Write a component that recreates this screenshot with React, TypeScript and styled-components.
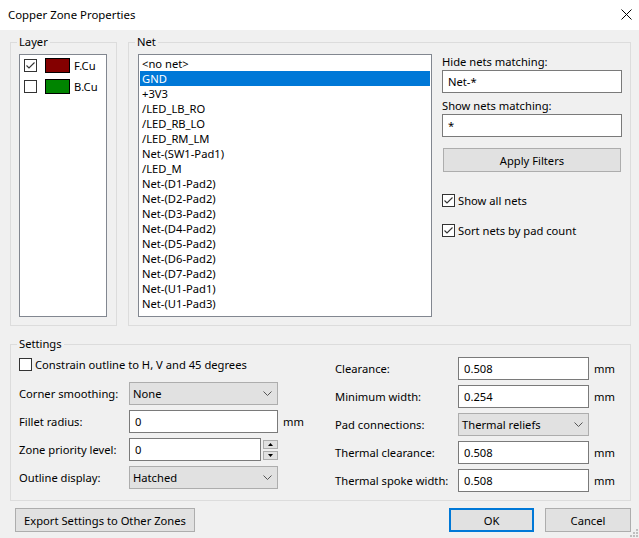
import React from "react";
import styled, { createGlobalStyle } from "styled-components";

const GlobalStyle = createGlobalStyle`
  html, body { margin: 0; padding: 0; background: #f0f0f0; }
  body {
    font-family: "Noto Sans", "Open Sans", sans-serif;
    font-size: 11.2px;
    color: #000;
  }
  * { box-sizing: border-box; }
`;

const Window = styled.div`
  position: relative;
  width: 639px;
  height: 538px;
  background: #f0f0f0;
  display: flex;
  flex-direction: column;
  overflow: hidden;
`;

const TitleBar = styled.div`
  flex: none;
  height: 30px;
  background: #fff;
  display: flex;
  align-items: center;
  justify-content: space-between;
  padding: 0 7px 2px 8px;
`;

const Title = styled.span`
  font-size: 11.4px;
`;

const Body = styled.div`
  flex: 1;
  display: flex;
  flex-direction: column;
  padding: 4px 8px 6px 10px;
`;

const TopRow = styled.div`
  display: flex;
  gap: 11px;
  height: 292px;
`;

const Group = styled.fieldset<{ $width?: number }>`
  margin: 0;
  min-width: 0;
  border: 1px solid #dcdcdc;
  padding: 4px 8px 8px;
  ${(p) => (p.$width ? `width: ${p.$width}px; flex: none;` : `flex: 1;`)}
`;

const Legend = styled.legend`
  padding: 0 2px;
  margin-left: -2px;
  line-height: 16px;
  font-size: 11.2px;
`;

const ListBox = styled.div<{ $width: number }>`
  width: ${(p) => p.$width}px;
  height: 263px;
  flex: none;
  background: #fff;
  border: 1px solid #828790;
  padding: 1px;
  overflow: hidden;
`;

const LayerRow = styled.div`
  height: 21px;
  display: flex;
  align-items: center;
  padding-left: 3px;
  margin-top: -1px;
  & + & { margin-top: 0; }
`;

const Swatch = styled.span<{ $color: string }>`
  width: 25px;
  height: 15px;
  margin-left: 8px;
  margin-right: 4px;
  background: ${(p) => p.$color};
  border: 1px solid #000;
  flex: none;
`;

const NetItem = styled.div<{ $selected?: boolean }>`
  height: 15px;
  line-height: 15px;
  padding-left: 2px;
  white-space: nowrap;
  background: ${(p) => (p.$selected ? "#0078d7" : "transparent")};
  color: ${(p) => (p.$selected ? "#fff" : "#000")};
`;

const NetContent = styled.div`
  display: flex;
  gap: 10px;
  padding-left: 1px;
`;

const FilterPanel = styled.div`
  flex: 1;
  display: flex;
  flex-direction: column;
`;

const FieldCaption = styled.div<{ $top?: number }>`
  line-height: 16px;
  margin-top: ${(p) => p.$top ?? 0}px;
`;

const TextBox = styled.div<{ $grow?: boolean }>`
  height: 23px;
  flex: ${(p) => (p.$grow ? "1" : "none")};
  background: #fff;
  border: 1px solid #7a7a7a;
  display: flex;
  align-items: center;
  padding-left: 5px;
  white-space: nowrap;
  min-width: 0;
`;

const Button = styled.div<{ $width?: number; $default?: boolean }>`
  height: 24px;
  ${(p) => (p.$width ? `width: ${p.$width}px;` : "")}
  background: #e1e1e1;
  border: ${(p) => (p.$default ? "2px solid #0078d7" : "1px solid #adadad")};
  display: flex;
  align-items: center;
  justify-content: center;
  white-space: nowrap;
  flex: none;
`;

const ApplyButton = styled(Button)`
  margin: 11px 1px 0;
`;

const CheckRow = styled.label<{ $top?: number }>`
  display: flex;
  align-items: center;
  gap: 3px;
  height: 16px;
  margin-top: ${(p) => p.$top ?? 0}px;
  white-space: nowrap;
`;

const Box = styled.span`
  width: 13px;
  height: 13px;
  flex: none;
  border: 1px solid #333;
  background: #fff;
  display: inline-flex;
  align-items: center;
  justify-content: center;
`;

const SettingsGroup = styled(Group)`
  margin-top: 10px;
  height: 165px;
  flex: none;
  padding: 0 8px 8px;
`;

const SettingsContent = styled.div`
  display: flex;
`;

const LeftCol = styled.div`
  width: 316px;
  flex: none;
  display: flex;
  flex-direction: column;
  gap: 5px;
`;

const RightCol = styled.div`
  flex: 1;
  display: flex;
  flex-direction: column;
  gap: 5px;
  padding-top: 5px;
`;

const ConstrainRow = styled(CheckRow)`
  height: 24px;
  margin-bottom: 1px;
`;

const FormRow = styled.div<{ $label: number; $control: number }>`
  display: grid;
  grid-template-columns: ${(p) => p.$label}px ${(p) => p.$control}px auto;
  align-items: center;
  height: 23px;
`;

const FieldLabel = styled.span`
  white-space: nowrap;
`;

const Unit = styled.span`
  margin-left: 5px;
`;

const ComboBox = styled.div`
  height: 23px;
  background: #e1e1e1;
  border: 1px solid #adadad;
  display: flex;
  align-items: center;
  justify-content: space-between;
  padding: 0 5px 0 3px;
  white-space: nowrap;
`;

const SpinField = styled.div`
  display: flex;
  align-items: center;
  height: 23px;
`;

const Spin = styled.div`
  width: 15px;
  margin-left: 2px;
  display: flex;
  flex-direction: column;
  gap: 2px;
  flex: none;
`;

const SpinButton = styled.div`
  height: 9px;
  background: #e1e1e1;
  border: 1px solid #adadad;
  display: flex;
  align-items: center;
  justify-content: center;
`;

const ButtonRow = styled.div`
  display: flex;
  align-items: center;
  margin-top: 7px;
  padding-left: 5px;
`;

const Spacer = styled.div`
  flex: 1;
`;

const Gap = styled.div`
  width: 11px;
  flex: none;
`;

const Grip = styled.svg`
  position: absolute;
  right: 1px;
  bottom: 1px;
`;

const Check = () => (
  <svg width="11" height="11" viewBox="0 0 11 11">
    <path d="M1.5 5.5 L4 8 L9.5 2.5" fill="none" stroke="#333" strokeWidth="1.1" />
  </svg>
);

const CheckBox = ({ checked }: { checked?: boolean }) => <Box>{checked && <Check />}</Box>;

const Chevron = () => (
  <svg width="9" height="5" viewBox="0 0 9 5">
    <path d="M0.5 0.5 L4.5 4.5 L8.5 0.5" fill="none" stroke="#555" strokeWidth="1" />
  </svg>
);

const nets = [
  "<no net>",
  "GND",
  "+3V3",
  "/LED_LB_RO",
  "/LED_RB_LO",
  "/LED_RM_LM",
  "Net-(SW1-Pad1)",
  "/LED_M",
  "Net-(D1-Pad2)",
  "Net-(D2-Pad2)",
  "Net-(D3-Pad2)",
  "Net-(D4-Pad2)",
  "Net-(D5-Pad2)",
  "Net-(D6-Pad2)",
  "Net-(D7-Pad2)",
  "Net-(U1-Pad1)",
  "Net-(U1-Pad3)",
];

export default function App() {
  return (
    <>
      <GlobalStyle />
      <Window>
        <TitleBar>
          <Title>Copper Zone Properties</Title>
          <svg width="11" height="11" viewBox="0 0 11 11">
            <path d="M0.5 0.5 L10.5 10.5 M10.5 0.5 L0.5 10.5" stroke="#000" strokeWidth="1" />
          </svg>
        </TitleBar>
        <Body>
          <TopRow>
            <Group $width={107}>
              <Legend>Layer</Legend>
              <ListBox $width={88}>
                <LayerRow>
                  <CheckBox checked />
                  <Swatch $color="#840000" />
                  F.Cu
                </LayerRow>
                <LayerRow>
                  <CheckBox />
                  <Swatch $color="#008400" />
                  B.Cu
                </LayerRow>
              </ListBox>
            </Group>
            <Group>
              <Legend>Net</Legend>
              <NetContent>
                <ListBox $width={294}>
                  {nets.map((n) => (
                    <NetItem key={n} $selected={n === "GND"}>
                      {n}
                    </NetItem>
                  ))}
                </ListBox>
                <FilterPanel>
                  <FieldCaption>Hide nets matching:</FieldCaption>
                  <TextBox>Net-*</TextBox>
                  <FieldCaption $top={5}>Show nets matching:</FieldCaption>
                  <TextBox>*</TextBox>
                  <ApplyButton>Apply Filters</ApplyButton>
                  <CheckRow $top={20}>
                    <CheckBox checked />
                    Show all nets
                  </CheckRow>
                  <CheckRow $top={14}>
                    <CheckBox checked />
                    Sort nets by pad count
                  </CheckRow>
                </FilterPanel>
              </NetContent>
            </Group>
          </TopRow>

          <SettingsGroup>
            <Legend>Settings</Legend>
            <SettingsContent>
              <LeftCol>
                <ConstrainRow>
                  <CheckBox />
                  Constrain outline to H, V and 45 degrees
                </ConstrainRow>
                <FormRow $label={110} $control={149}>
                  <FieldLabel>Corner smoothing:</FieldLabel>
                  <ComboBox>
                    None
                    <Chevron />
                  </ComboBox>
                </FormRow>
                <FormRow $label={110} $control={149}>
                  <FieldLabel>Fillet radius:</FieldLabel>
                  <TextBox>0</TextBox>
                  <Unit>mm</Unit>
                </FormRow>
                <FormRow $label={110} $control={149}>
                  <FieldLabel>Zone priority level:</FieldLabel>
                  <SpinField>
                    <TextBox $grow>0</TextBox>
                    <Spin>
                      <SpinButton>
                        <svg width="5" height="3" viewBox="0 0 5 3">
                          <path d="M0 3 L2.5 0 L5 3 Z" fill="#000" />
                        </svg>
                      </SpinButton>
                      <SpinButton>
                        <svg width="5" height="3" viewBox="0 0 5 3">
                          <path d="M0 0 L2.5 3 L5 0 Z" fill="#000" />
                        </svg>
                      </SpinButton>
                    </Spin>
                  </SpinField>
                </FormRow>
                <FormRow $label={110} $control={149}>
                  <FieldLabel>Outline display:</FieldLabel>
                  <ComboBox>
                    Hatched
                    <Chevron />
                  </ComboBox>
                </FormRow>
              </LeftCol>
              <RightCol>
                <FormRow $label={123} $control={131}>
                  <FieldLabel>Clearance:</FieldLabel>
                  <TextBox>0.508</TextBox>
                  <Unit>mm</Unit>
                </FormRow>
                <FormRow $label={123} $control={131}>
                  <FieldLabel>Minimum width:</FieldLabel>
                  <TextBox>0.254</TextBox>
                  <Unit>mm</Unit>
                </FormRow>
                <FormRow $label={123} $control={131}>
                  <FieldLabel>Pad connections:</FieldLabel>
                  <ComboBox>
                    Thermal reliefs
                    <Chevron />
                  </ComboBox>
                </FormRow>
                <FormRow $label={123} $control={131}>
                  <FieldLabel>Thermal clearance:</FieldLabel>
                  <TextBox>0.508</TextBox>
                  <Unit>mm</Unit>
                </FormRow>
                <FormRow $label={123} $control={131}>
                  <FieldLabel>Thermal spoke width:</FieldLabel>
                  <TextBox>0.508</TextBox>
                  <Unit>mm</Unit>
                </FormRow>
              </RightCol>
            </SettingsContent>
          </SettingsGroup>

          <ButtonRow>
            <Button $width={180}>Export Settings to Other Zones</Button>
            <Spacer />
            <Button $width={85} $default>
              OK
            </Button>
            <Gap />
            <Button $width={86}>Cancel</Button>
          </ButtonRow>
        </Body>
        <Grip width="8" height="8" viewBox="0 0 8 8">
          {[
            [6, 0],
            [3, 3],
            [6, 3],
            [0, 6],
            [3, 6],
            [6, 6],
          ].map(([x, y]) => (
            <rect key={`${x}-${y}`} x={x} y={y} width="2" height="2" fill="#bfbfbf" />
          ))}
        </Grip>
      </Window>
    </>
  );
}
